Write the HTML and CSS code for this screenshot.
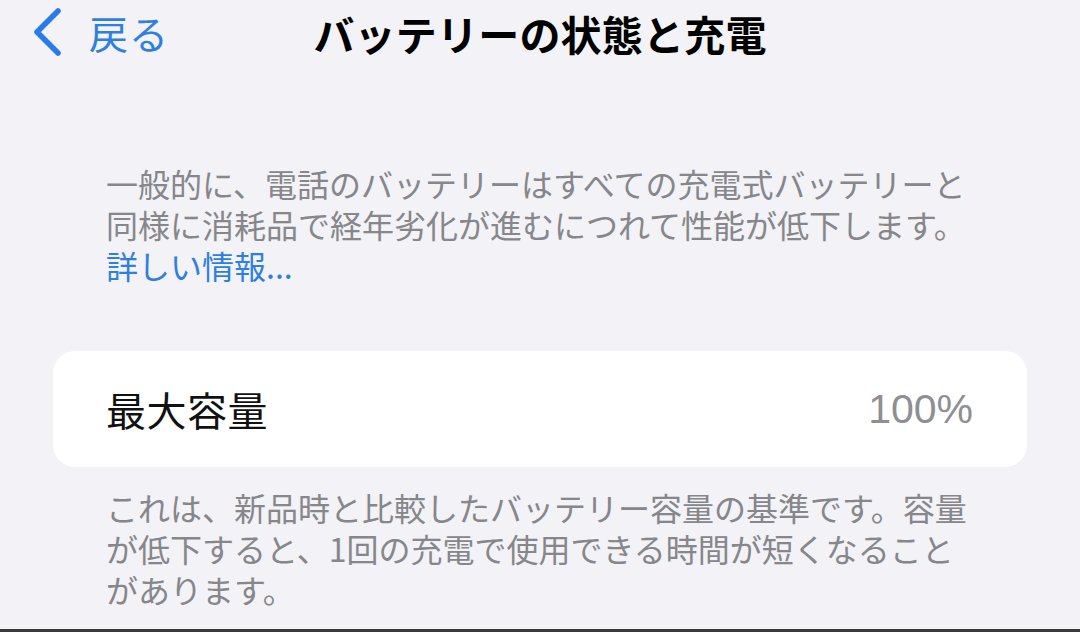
FILE: index.html
```html
<!DOCTYPE html>
<html lang="ja">
<head>
<meta charset="utf-8">
<title>バッテリーの状態と充電</title>
<link rel="stylesheet" href="styles.css">
</head>
<body>
<div class="page">
  <header class="nav">
    <div class="back">
      <svg class="chev" width="32" height="50" viewBox="0 0 32 50" aria-hidden="true">
        <path d="M26 4 L5 25 L26 46" fill="none" stroke="#2a7be8" stroke-width="5.5" stroke-linecap="round" stroke-linejoin="round"/>
      </svg>
      <span class="back-label">戻る</span>
    </div>
    <h1 class="title">バッテリーの状態と充電</h1>
    <div class="spacer"></div>
  </header>

  <section class="intro">
    <p class="note">一般的に、電話のバッテリーはすべての充電式バッテリーと<br>同様に消耗品で経年劣化が進むにつれて性能が低下します。<br><span class="link">詳しい情報...</span></p>
  </section>

  <section class="card">
    <div class="row">
      <span class="row-label">最大容量</span>
      <span class="row-value">100%</span>
    </div>
  </section>

  <section class="footer-note">
    <p class="note">これは、新品時と比較したバッテリー容量の基準です。容量<br>が低下すると、1回の充電で使用できる時間が短くなること<br>があります。</p>
  </section>
</div>
</body>
</html>
```

FILE: styles.css
```css
* { box-sizing: border-box; }
html, body {
  margin: 0;
  padding: 0;
  background: #f2f2f7;
}
body {
  font-family: "Noto Sans CJK JP", "Noto Sans", sans-serif;
  width: 1080px;
  height: 632px;
  overflow: hidden;
}
.page {
  width: 1080px;
  height: 632px;
  display: flex;
  flex-direction: column;
  border-bottom: 3px solid #3a3a3c;
}
.nav {
  height: 66px;
  display: grid;
  grid-template-columns: 1fr auto 1fr;
  align-items: center;
}
.back {
  display: flex;
  align-items: center;
  padding-left: 32px;
  gap: 25px;
  margin-top: -2px;
}
.chev { display: block; }
.back-label {
  color: #2f7fe0;
  font-size: 39px;
  line-height: 1;
  letter-spacing: 1px;
}
.title {
  margin: 0;
  font-size: 41px;
  font-weight: 700;
  color: #000;
  line-height: 1;
  letter-spacing: 0.2px;
}
.note {
  margin: 0;
  font-size: 32px;
  line-height: 41px;
  color: #86868b;
  letter-spacing: 0;
}
.intro {
  padding: 97px 0 0 106px;
}
.link { color: #2f7fe0; }
.card {
  margin: 65px 53px 0 53px;
  height: 116px;
  background: #fff;
  border-radius: 22px;
  display: flex;
  align-items: center;
  padding: 0 54px 0 53px;
}
.row {
  flex: 1;
  display: flex;
  justify-content: space-between;
  align-items: center;
}
.row-label {
  font-size: 40px;
  color: #111;
  letter-spacing: 0.5px;
}
.row-value {
  font-family: "Liberation Sans", "Noto Sans", sans-serif;
  font-size: 41px;
  color: #8e8e93;
  letter-spacing: 0;
}
.footer-note {
  padding: 20px 0 0 106px;
}
```
